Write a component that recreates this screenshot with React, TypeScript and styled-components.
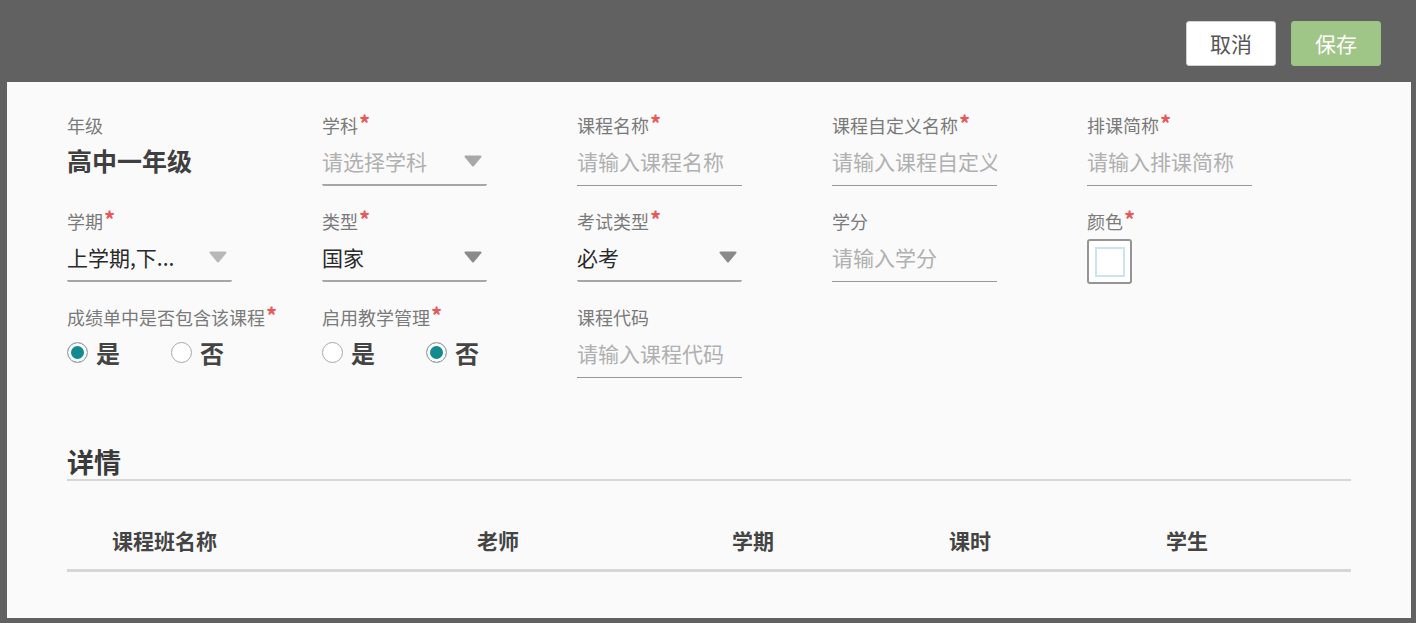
import React, { FC } from 'react'
import styled, { createGlobalStyle } from 'styled-components'

const GlobalStyle = createGlobalStyle`
  html, body {
    margin: 0;
    padding: 0;
    background: #616161;
    font-family: "Noto Sans CJK SC", "Noto Sans", sans-serif;
  }
  * {
    box-sizing: border-box;
  }
`

const Frame = styled.div`
  display: flex;
  flex-direction: column;
  height: 100vh;
  padding: 0 5px 5px 7px;
  background: #616161;
`

const TopBar = styled.header`
  display: flex;
  justify-content: flex-end;
  align-items: flex-start;
  gap: 15px;
  height: 82px;
  padding: 21px 30px 0 0;
`

const Button = styled.button<{ $primary?: boolean }>`
  width: 90px;
  height: 45px;
  border-radius: 3px;
  border: 1px solid ${({ $primary }) => ($primary ? '#9cc284' : '#d0d0d0')};
  background: ${({ $primary }) => ($primary ? '#9fc587' : '#ffffff')};
  color: ${({ $primary }) => ($primary ? '#ffffff' : '#555555')};
  font-family: inherit;
  font-size: 21px;
  line-height: 1;
  padding: 0;
  cursor: pointer;
`

const Panel = styled.main`
  flex: 1;
  background: #fafafa;
  padding: 31px 60px 0 60px;
`

const FormGrid = styled.div`
  display: grid;
  grid-template-columns: repeat(5, 255px);
  row-gap: 23px;
`

const Field = styled.div`
  display: flex;
  flex-direction: column;
  width: 165px;
`

const Label = styled.div`
  height: 24px;
  font-size: 18px;
  line-height: 24px;
  color: #7a7a7a;
  white-space: nowrap;
`

const Star = styled.span`
  display: inline-block;
  vertical-align: top;
  margin-left: 1px;
  margin-top: -3px;
  font-size: 22px;
  font-weight: 700;
  line-height: 24px;
  color: #e8585b;
`

const Static = styled.div`
  height: 49px;
  display: flex;
  align-items: center;
  padding-bottom: 4px;
  font-size: 25px;
  font-weight: 700;
  color: #3f3f3f;
  white-space: nowrap;
`

const SelectBox = styled.div`
  height: 49px;
  display: flex;
  align-items: center;
  justify-content: space-between;
  padding: 0 5px 0 0;
  border-bottom: 2px solid #a6a6a6;
  border-radius: 0 0 2px 2px;
`

const SelectValue = styled.span<{ $placeholder?: boolean }>`
  font-size: 21px;
  color: ${({ $placeholder }) => ($placeholder ? '#b0b0b0' : '#2a2a2a')};
  white-space: nowrap;
`

const TextInput = styled.input`
  height: 49px;
  width: 100%;
  padding: 0;
  border: none;
  border-bottom: 1px solid #999999;
  background: transparent;
  font-family: inherit;
  font-size: 21px;
  color: #333;
  outline: none;
  &::placeholder {
    color: #b0b0b0;
  }
`

const ColorWrap = styled.div`
  height: 49px;
  padding-top: 6px;
`

const ColorSwatch = styled.div`
  width: 45px;
  height: 45px;
  border: 2px solid #959595;
  border-radius: 3px;
  background: #ffffff;
  display: flex;
  align-items: center;
  justify-content: center;
`

const ColorInner = styled.div`
  width: 30px;
  height: 30px;
  border: 2px solid #cde5ea;
  background: #ffffff;
`

const RadioGroup = styled.div`
  height: 49px;
  display: flex;
  align-items: center;
  padding-bottom: 2px;
`

const RadioOption = styled.label`
  display: flex;
  align-items: center;
  gap: 8px;
  flex: 0 0 104px;
  font-size: 24px;
  font-weight: 700;
  color: #444;
  cursor: pointer;
`

const RadioDot = styled.span<{ $checked?: boolean }>`
  width: 21px;
  height: 21px;
  border-radius: 50%;
  border: 1px solid #a9a9a9;
  background: ${({ $checked }) => ($checked ? '#138a8f' : '#ffffff')};
  box-shadow: ${({ $checked }) => ($checked ? 'inset 0 0 0 3px #ffffff' : 'none')};
  flex-shrink: 0;
`

const SectionTitle = styled.h2`
  margin: 67px 0 0 0;
  font-size: 27px;
  font-weight: 700;
  line-height: 34px;
  color: #3a3a3a;
  border-bottom: 2px solid #d6d6d6;
`

const TableHead = styled.div`
  display: grid;
  grid-template-columns: 365px 255px 217px 217px 1fr;
  align-items: center;
  height: 61px;
  margin-top: 30px;
  padding-left: 45px;
  border-bottom: 3px solid #d6d6d6;
`

const HeadCell = styled.div`
  font-size: 21px;
  font-weight: 700;
  color: #444;
  white-space: nowrap;
`

const Caret: FC<{ color: string }> = ({ color }) => (
  <svg width="18" height="12" viewBox="0 0 18 12">
    <path d="M1.5 1.5 L16.5 1.5 L9 10.5 Z" fill={color} stroke={color} strokeWidth="2" strokeLinejoin="round" />
  </svg>
)

type LabelProps = { text: string; required?: boolean }

const FieldLabel: FC<LabelProps> = ({ text, required }) => (
  <Label>
    {text}
    {required && <Star>*</Star>}
  </Label>
)

const SelectField: FC<LabelProps & { value: string; placeholder?: boolean; caret: string }> = ({
  text,
  required,
  value,
  placeholder,
  caret,
}) => (
  <Field>
    <FieldLabel text={text} required={required} />
    <SelectBox>
      <SelectValue $placeholder={placeholder}>{value}</SelectValue>
      <Caret color={caret} />
    </SelectBox>
  </Field>
)

const InputField: FC<LabelProps & { placeholder: string }> = ({ text, required, placeholder }) => (
  <Field>
    <FieldLabel text={text} required={required} />
    <TextInput placeholder={placeholder} />
  </Field>
)

const RadioField: FC<LabelProps & { yes: boolean }> = ({ text, required, yes }) => (
  <Field>
    <FieldLabel text={text} required={required} />
    <RadioGroup>
      <RadioOption>
        <RadioDot $checked={yes} />是
      </RadioOption>
      <RadioOption>
        <RadioDot $checked={!yes} />否
      </RadioOption>
    </RadioGroup>
  </Field>
)

const columns = ['课程班名称', '老师', '学期', '课时', '学生']

export default function App() {
  return (
    <>
      <GlobalStyle />
      <Frame>
        <TopBar>
          <Button>取消</Button>
          <Button $primary>保存</Button>
        </TopBar>
        <Panel>
          <FormGrid>
            <Field>
              <FieldLabel text="年级" />
              <Static>高中一年级</Static>
            </Field>
            <SelectField text="学科" required value="请选择学科" placeholder caret="#a8a8a8" />
            <InputField text="课程名称" required placeholder="请输入课程名称" />
            <InputField text="课程自定义名称" required placeholder="请输入课程自定义名称" />
            <InputField text="排课简称" required placeholder="请输入排课简称" />

            <SelectField text="学期" required value="上学期,下..." caret="#b8b8b8" />
            <SelectField text="类型" required value="国家" caret="#8a8a8a" />
            <SelectField text="考试类型" required value="必考" caret="#8a8a8a" />
            <InputField text="学分" placeholder="请输入学分" />
            <Field>
              <FieldLabel text="颜色" required />
              <ColorWrap>
                <ColorSwatch>
                  <ColorInner />
                </ColorSwatch>
              </ColorWrap>
            </Field>

            <RadioField text="成绩单中是否包含该课程" required yes />
            <RadioField text="启用教学管理" required yes={false} />
            <InputField text="课程代码" placeholder="请输入课程代码" />
          </FormGrid>

          <SectionTitle>详情</SectionTitle>
          <TableHead>
            {columns.map((c) => (
              <HeadCell key={c}>{c}</HeadCell>
            ))}
          </TableHead>
        </Panel>
      </Frame>
    </>
  )
}
